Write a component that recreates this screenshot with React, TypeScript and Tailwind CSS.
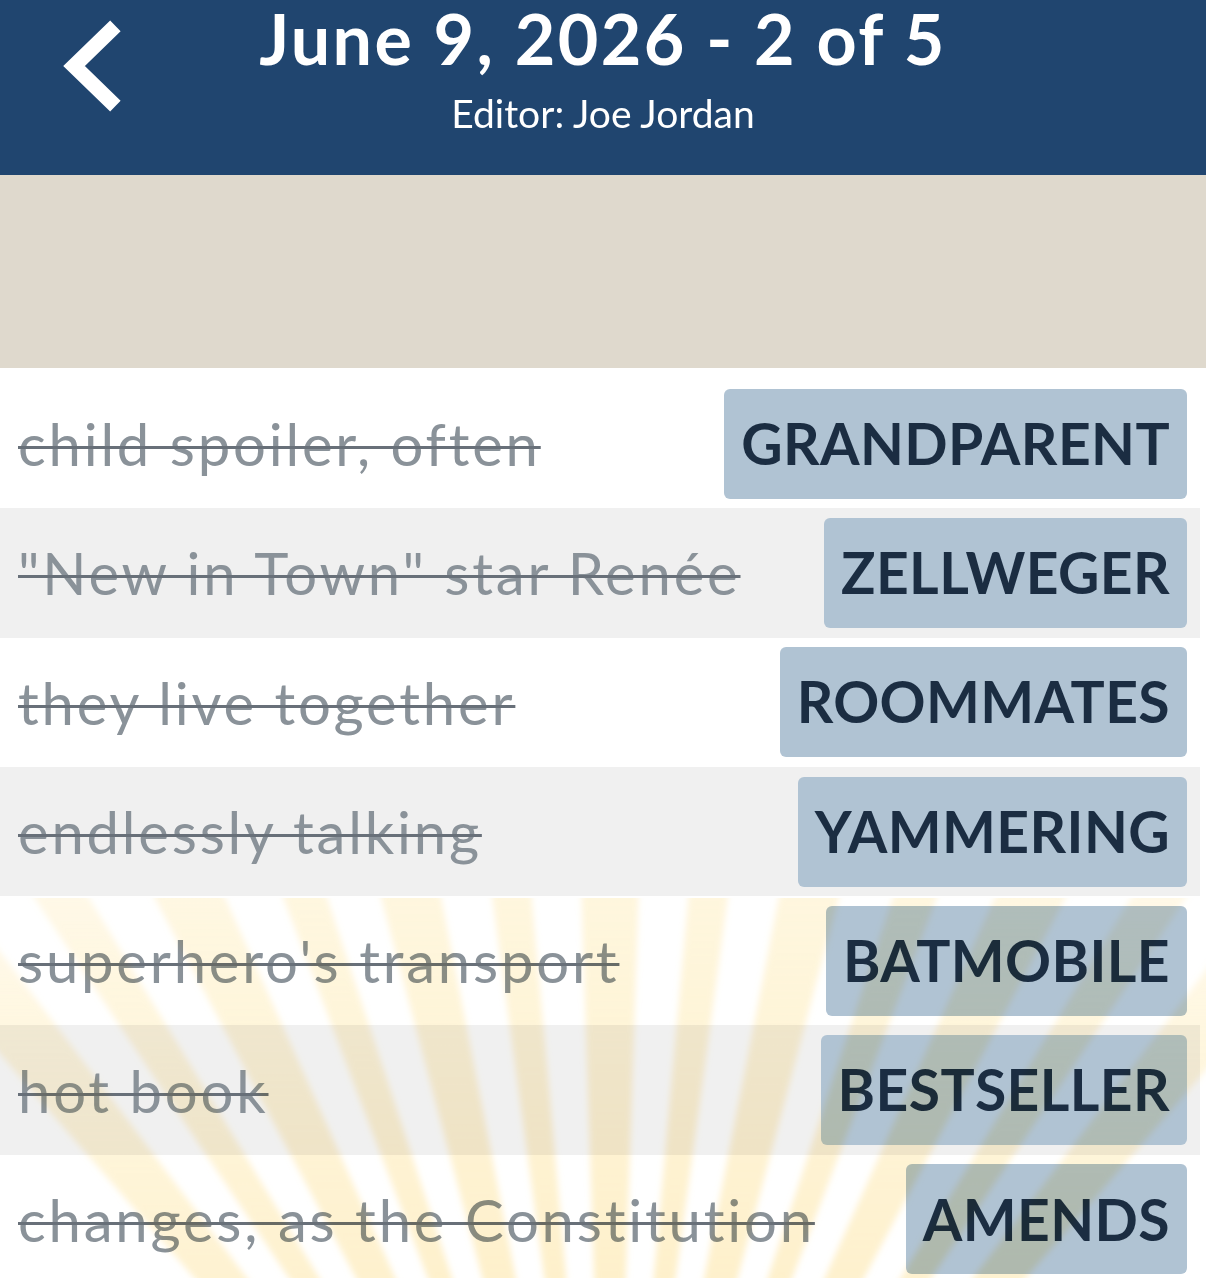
import React from "react"

const clues = [
  { clue: "child spoiler, often", answer: "GRANDPARENT" },
  { clue: "\"New in Town\" star Renée", answer: "ZELLWEGER" },
  { clue: "they live together", answer: "ROOMMATES" },
  { clue: "endlessly talking", answer: "YAMMERING" },
  { clue: "superhero's transport", answer: "BATMOBILE" },
  { clue: "hot book", answer: "BESTSELLER" },
  { clue: "changes, as the Constitution", answer: "AMENDS" },
]

// faint sun rays coming up from below the screen
function SunRays() {
  const cx = 610
  const cy = 860
  const len = 1300
  const rays = []
  for (let a = -39; a <= 39; a += 6.5) {
    const w = Math.abs(Math.round(a / 6.5)) % 2 === 0 ? 1.9 : 1.3
    const r1 = ((a - w) * Math.PI) / 180
    const r2 = ((a + w) * Math.PI) / 180
    const p = [
      [cx, cy],
      [cx + Math.sin(r1) * len, cy - Math.cos(r1) * len],
      [cx + Math.sin(r2) * len, cy - Math.cos(r2) * len],
    ]
    rays.push(p.map((q) => q.join(",")).join(" "))
  }
  return (
    <svg
      className="pointer-events-none absolute bottom-0 left-0 mix-blend-multiply"
      width="1206"
      height="380"
      viewBox="0 0 1206 380"
    >
      <defs>
        <linearGradient id="fade" x1="0" y1="0" x2="0" y2="1">
          <stop offset="0" stopColor="#fde7a6" stopOpacity="0" />
          <stop offset="0.3" stopColor="#fde7a6" stopOpacity="0.35" />
          <stop offset="1" stopColor="#fde3a0" stopOpacity="0.8" />
        </linearGradient>
        <filter id="soft" x="-10%" y="-10%" width="120%" height="120%">
          <feGaussianBlur stdDeviation="3" />
        </filter>
      </defs>
      <g filter="url(#soft)">
        {rays.map((pts, i) => (
          <polygon key={i} points={pts} fill="url(#fade)" />
        ))}
      </g>
    </svg>
  )
}

export default function App() {
  return (
    <div className="relative w-[1206px] h-[1278px] overflow-hidden bg-white font-['Lato',sans-serif]">
      {/* Header */}
      <div className="relative h-[175px] bg-[#20456f] text-white flex flex-col items-center">
        <button className="absolute left-0 top-0">
          <svg width="140" height="140" viewBox="0 0 140 140">
            <path d="M110 31 L74 66 L110 101" fill="none" stroke="white" strokeWidth="15" strokeLinecap="square" strokeLinejoin="miter" />
          </svg>
        </button>
        <div className="pt-[3px] text-[70px] font-bold leading-[70px] tracking-[2.4px]">June 9, 2026 - 2 of 5</div>
        <div className="mt-[20px] text-[39px] leading-[40px]">Editor: Joe Jordan</div>
      </div>

      {/* empty beige band */}
      <div className="h-[193px] bg-[#dfd9cd]" />

      {/* Word list */}
      <div className="pt-[11px] pr-[6px]">
        {clues.map((c, i) => (
          <div
            key={c.answer}
            className={`h-[129.3px] flex items-center justify-between pl-[18px] pr-[13px] ${i % 2 === 1 ? "bg-[#f0f0f0]" : "bg-white"}`}
          >
            <span className="text-[58px] tracking-[2.8px] text-[#8a9299] line-through decoration-[#687079] decoration-[3px] whitespace-nowrap">
              {c.clue}
            </span>
            <span className="h-[110px] flex items-center rounded-[6px] bg-[#b0c3d3] px-[17px] text-[57px] font-bold tracking-[0.4px] text-[#1b2d42]">
              {c.answer}
            </span>
          </div>
        ))}
      </div>

      <SunRays />
    </div>
  )
}
